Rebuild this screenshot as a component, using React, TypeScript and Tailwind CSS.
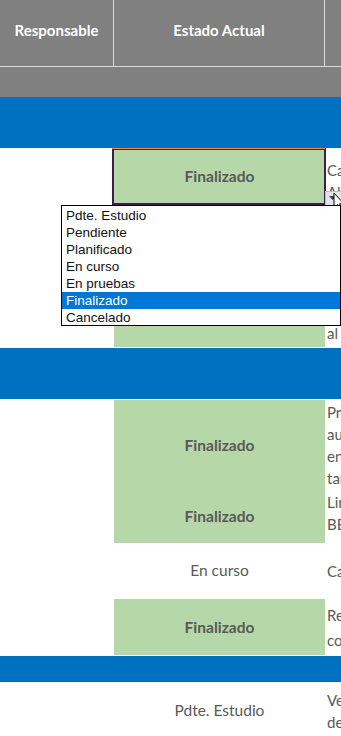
import React from "react";

const GREEN = "bg-[#b6d7a8]";

const opciones = [
  "Pdte. Estudio",
  "Pendiente",
  "Planificado",
  "En curso",
  "En pruebas",
  "Finalizado",
  "Cancelado",
];

function Notes({ lines, className = "" }: { lines: string[]; className?: string }) {
  return (
    <div className={`flex-1 overflow-hidden pl-[2px] text-[15px] leading-[22px] text-[#595959] whitespace-nowrap ${className}`}>
      {lines.map((l, i) => (
        <div key={i}>{l}</div>
      ))}
    </div>
  );
}

function BlueBand({ h }: { h: string }) {
  return <div className={`${h} bg-[#0070c0]`} />;
}

export default function App() {
  return (
    <div className="relative w-[341px] h-[736px] overflow-hidden bg-white" style={{ fontFamily: "Lato, 'Open Sans', sans-serif" }}>
      {/* header */}
      <div className="flex h-[66px] bg-[#808080] text-white font-bold text-[15px]">
        <div className="w-[114px] border-r border-[#d9d9d9] flex items-center justify-center pb-[6px]">Responsable</div>
        <div className="w-[211px] border-r border-[#d9d9d9] flex items-center justify-center pb-[6px]">Estado Actual</div>
        <div className="flex-1" />
      </div>
      <div className="h-[31px] bg-[#808080] border-t border-[#d9d9d9]" />
      <BlueBand h="h-[51px]" />

      {/* fila 1 - celda seleccionada */}
      <div className="flex h-[56px]">
        <div className="w-[114px]" />
        <div className={`relative w-[211px] ${GREEN} flex items-center justify-center pt-[2px] text-[15.5px] font-bold text-[#595959]`}>
          Finalizado
          <div className="absolute -left-[2px] -right-[1px] top-0 -bottom-[1px] border-2 border-[#3d1e4e]" />
          <div className="absolute -left-[2px] right-0 top-0 h-[1px] bg-[#f08a3c]" />
        </div>
        <Notes lines={["Cambio", "Alta"]} className="pt-[11px]" />
      </div>

      {/* fila 2 (bajo la lista) */}
      <div className="flex h-[144px]">
        <div className="w-[114px]" />
        <div className="w-[211px] flex flex-col">
          <div className={`flex-1 ${GREEN}`} />
          <div className="h-[1px]" />
        </div>
        <Notes lines={["al"]} className="flex flex-col justify-end pb-[4px]" />
      </div>

      <BlueBand h="h-[51px]" />

      {/* fila 3 */}
      <div className="flex h-[91px] pt-[1px]">
        <div className="w-[114px]" />
        <div className={`w-[211px] ${GREEN} flex items-center justify-center pt-[1px] text-[15.5px] font-bold text-[#595959]`}>Finalizado</div>
        <Notes lines={["Proceso", "automático", "en", "tareas"]} className="pt-[1px]" />
      </div>
      {/* fila 4 */}
      <div className="flex h-[53px]">
        <div className="w-[114px]" />
        <div className={`w-[211px] ${GREEN} flex items-center justify-center pt-[1px] text-[15.5px] font-bold text-[#595959]`}>Finalizado</div>
        <Notes lines={["Limpieza", "BBDD"]} className="pt-[1px]" />
      </div>
      {/* fila 5 */}
      <div className="flex h-[56px]">
        <div className="w-[114px]" />
        <div className="w-[211px] flex items-center justify-center text-[15.5px] text-[#595959]">En curso</div>
        <Notes lines={["Carga"]} className="pt-[17px]" />
      </div>
      {/* fila 6 */}
      <div className="flex h-[57px]">
        <div className="w-[114px]" />
        <div className="w-[211px] flex flex-col">
          <div className={`flex-1 ${GREEN} flex items-center justify-center pt-[2px] text-[15.5px] font-bold text-[#595959]`}>Finalizado</div>
          <div className="h-[1px]" />
        </div>
        <Notes lines={["Revisión", "control"]} className="pt-[4px] leading-[25px]" />
      </div>

      <BlueBand h="h-[26px]" />

      {/* fila 7 */}
      <div className="flex h-[54px]">
        <div className="w-[114px]" />
        <div className="w-[211px] flex items-center justify-center pt-[4px] text-[15.5px] text-[#595959]">Pdte. Estudio</div>
        <Notes lines={["Ver", "de"]} className="pt-[7px]" />
      </div>

      {/* botón desplegable */}
      <div className="absolute left-[325px] top-[191px] w-[16px] h-[14px] bg-[#e1e4e8] border-l border-t border-[#b9bec6] flex items-start pl-[3px] pt-[4px]">
        <svg width="7" height="4" viewBox="0 0 7 4">
          <path d="M0 0 L7 0 L3.5 4 Z" fill="#444" />
        </svg>
      </div>
      <svg className="absolute left-[333px] top-[192px]" width="12" height="20" viewBox="0 0 12 20">
        <path d="M1 1 L1 16 L4.5 12.5 L7 18.5 L9 17.5 L6.5 11.8 L11 11.8 Z" fill="#fff" stroke="#000" strokeWidth="1" />
      </svg>

      {/* lista de validación */}
      <div
        className="absolute left-[61px] top-[205px] w-[280px] h-[121px] bg-white border border-black pt-[1px] text-[13.5px] text-[#111]"
        style={{ fontFamily: "'Liberation Sans', Arial, sans-serif" }}
      >
        {opciones.map((o) => (
          <div
            key={o}
            className={`h-[17px] leading-[17px] pl-[4px] ${o === "Finalizado" ? "bg-[#0078d7] text-white" : ""}`}
          >
            {o}
          </div>
        ))}
      </div>
    </div>
  );
}
